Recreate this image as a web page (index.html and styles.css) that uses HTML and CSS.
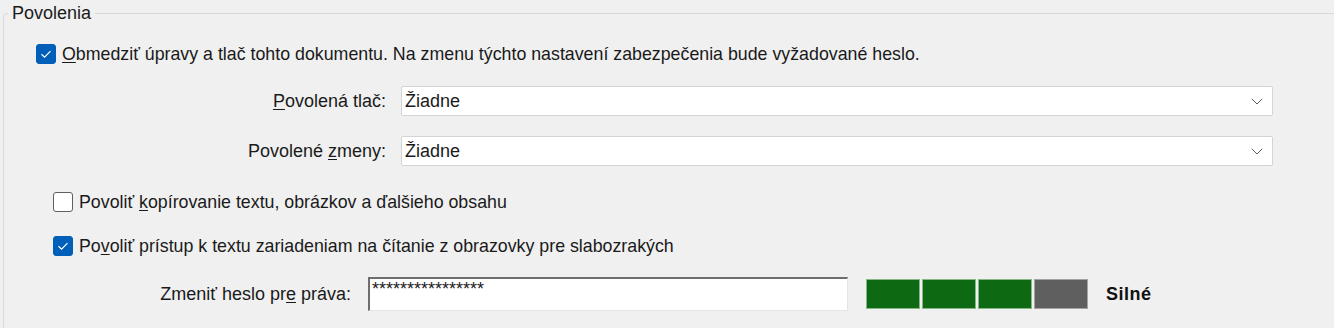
FILE: index.html
```html
<!DOCTYPE html>
<html lang="sk">
<head>
<meta charset="utf-8">
<link rel="stylesheet" href="styles.css">
</head>
<body>
<fieldset class="group">
  <legend class="group-title">Povolenia</legend>

  <label class="check-row main-check">
    <span class="box checked"><svg viewBox="0 0 20 20" width="20" height="20"><path d="M5.5 10.2 L8.6 13.2 L14.5 7.2" fill="none" stroke="#fff" stroke-width="1.2"/></svg></span>
    <span class="check-text"><u>O</u>bmedziť úpravy a tlač tohto dokumentu. Na zmenu týchto nastavení zabezpečenia bude vyžadované heslo.</span>
  </label>

  <div class="field-row row-print">
    <span class="field-label"><u>P</u>ovolená tlač:</span>
    <div class="select">
      <span class="select-value">Žiadne</span>
      <svg class="chevron" viewBox="0 0 12 7" width="12" height="7"><path d="M0.8 0.8 L6 6 L11.2 0.8" fill="none" stroke="#5c5c5c" stroke-width="1"/></svg>
    </div>
  </div>

  <div class="field-row row-changes">
    <span class="field-label">Povolené <u>z</u>meny:</span>
    <div class="select">
      <span class="select-value">Žiadne</span>
      <svg class="chevron" viewBox="0 0 12 7" width="12" height="7"><path d="M0.8 0.8 L6 6 L11.2 0.8" fill="none" stroke="#5c5c5c" stroke-width="1"/></svg>
    </div>
  </div>

  <label class="check-row sub-check row-copy">
    <span class="box"></span>
    <span class="check-text">Povoliť <u>k</u>opírovanie textu, obrázkov a ďalšieho obsahu</span>
  </label>

  <label class="check-row sub-check row-access">
    <span class="box checked"><svg viewBox="0 0 20 20" width="20" height="20"><path d="M5.5 10.2 L8.6 13.2 L14.5 7.2" fill="none" stroke="#fff" stroke-width="1.2"/></svg></span>
    <span class="check-text">Po<u>v</u>oliť prístup k textu zariadeniam na čítanie z obrazovky pre slabozrakých</span>
  </label>

  <div class="password-row">
    <span class="pw-label">Zmeniť heslo pr<u>e</u> práva:</span>
    <div class="pw-input">****************</div>
    <div class="strength">
      <span class="seg on"></span>
      <span class="seg on"></span>
      <span class="seg on"></span>
      <span class="seg off"></span>
    </div>
    <span class="strength-text">Silné</span>
  </div>
</fieldset>
</body>
</html>
```
FILE: styles.css
```css
html, body {
  margin: 0;
  padding: 0;
  background: #f0f0f0;
}
body {
  font-family: "Liberation Sans", Arial, sans-serif;
  font-size: 18px;
  color: #1a1a1a;
  width: 1334px;
  height: 328px;
  overflow: hidden;
}
u {
  text-decoration-thickness: 1px;
  text-underline-offset: 2px;
}
.group {
  margin: 3px -20px 0 3px;
  padding: 16px 0 20px 0;
  border: 1px solid #d9d9d9;
  border-radius: 4px;
  min-width: 0;
}
.group-title {
  margin-left: 4px;
  padding: 0 4px;
  font-size: 18px;
  line-height: 20px;
  color: #1a1a1a;
}
.check-row {
  display: flex;
  align-items: center;
  height: 30px;
}
.check-text {
  font-size: 17.8px;
}
.main-check {
  padding-left: 32px;
}
.sub-check {
  padding-left: 49px;
}
.box {
  width: 18px;
  height: 18px;
  border: 1px solid #5f5f5f;
  border-radius: 3px;
  background: #fff;
  flex: none;
  margin-right: 6px;
  display: flex;
}
.box svg {
  margin: -1px;
}
.box.checked {
  background: #005fb8;
  border-color: #005fb8;
}
.field-row {
  display: flex;
  align-items: center;
  height: 30px;
}
.row-print { margin-top: 17px; }
.row-changes { margin-top: 20px; }
.row-copy { margin-top: 21px; }
.row-access { margin-top: 14px; }
.field-label {
  width: 382px;
  text-align: right;
  padding-right: 15px;
  flex: none;
}
.select {
  width: 858px;
  height: 28px;
  border: 1px solid #d4d4d4;
  border-radius: 2px;
  background: #fff;
  display: flex;
  align-items: center;
  justify-content: space-between;
  padding: 0 9px 0 3px;
  box-sizing: content-box;
}
.chevron {
  flex: none;
}
.password-row {
  display: flex;
  align-items: center;
  margin-top: 16px;
  height: 34px;
}
.pw-label {
  width: 347px;
  text-align: right;
  padding-right: 17px;
  flex: none;
}
.pw-input {
  border-style: solid;
  border-width: 2px 1px 1px 2px;
  border-color: #6e6e6e #e3e3e3 #e3e3e3 #6e6e6e;
  background: #fff;
  font-size: 18px;
  line-height: 18px;
  padding: 1px 2px;
  box-sizing: border-box;
  width: 480px;
  height: 34px;
  overflow: hidden;
  color: #1a1a1a;
}
.strength {
  display: flex;
  gap: 2px;
  margin-left: 18px;
  height: 30px;
}
.seg {
  width: 54px;
  height: 30px;
  box-sizing: border-box;
  border: 1px solid #86b886;
}
.seg.on {
  background: #0e6a12;
}
.seg.off {
  background: #5f5f5f;
  border-color: #a3a3a3;
}
.strength-text {
  margin-left: 18px;
  font-weight: bold;
  font-size: 18px;
  letter-spacing: 0.5px;
  color: #111;
}
```
